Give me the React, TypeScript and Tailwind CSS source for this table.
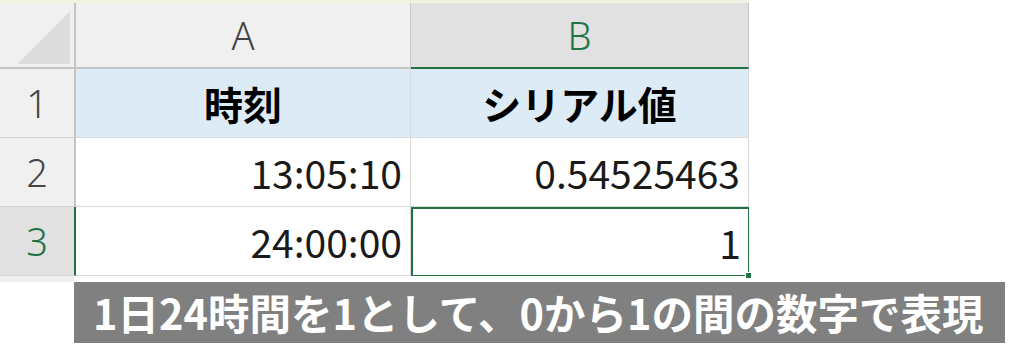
const cjk = "font-['Noto_Sans_CJK_JP',sans-serif]"
const head = "font-['Noto_Sans','Noto_Sans_CJK_JP',sans-serif] font-light text-[38px] text-[#444]"

const RowHead = ({ n, active }: { n: string; active?: boolean }) => (
  <div
    className={`flex items-center justify-center border-b border-[#d4d4d4] ${
      active
        ? "bg-[#e1e1e1] text-[#217346] border-r-2 border-r-[#217346]"
        : "bg-[#f0f0f0] text-[#444] border-r-2 border-r-[#c4c4c4]"
    } ${head}`}
  >
    <span className={active ? "text-[#217346]" : ""}>{n}</span>
  </div>
)

const Cell = ({ children, className = "" }: { children?: React.ReactNode; className?: string }) => (
  <div className={`flex items-center justify-end pr-[8px] border-r border-b border-[#d9d9d9] text-[39px] text-[#1a1a1a] ${cjk} ${className}`}>
    {children}
  </div>
)

export default function App() {
  return (
    <div className="w-[1013px] h-[363px] bg-white overflow-hidden">
      <div className="w-[749px] h-[3px] bg-[#eef2e1]" />

      <div className="grid grid-cols-[76px_335px_338px] grid-rows-[66px_69px_69px_69px] w-[749px]">
        {/* corner */}
        <div className="bg-[#f0f0f0] border-r-2 border-b-2 border-[#c4c4c4] relative">
          <svg width="74" height="64" className="absolute left-0 top-0">
            <polygon points="17,61 70,8 70,61" fill="#dcdcdc" />
          </svg>
        </div>
        <div className={`flex items-center justify-center bg-[#f0f0f0] border-r border-[#c8c8c8] border-b-2 border-b-[#c4c4c4] ${head}`}>
          A
        </div>
        <div className={`flex items-center justify-center bg-[#e1e1e1] border-r border-[#c8c8c8] border-b-2 border-b-[#217346] ${head}`}>
          <span className="text-[#217346]">B</span>
        </div>

        {/* row 1 */}
        <RowHead n="1" />
        <Cell className="!justify-center !pr-0 bg-[#ddebf7] font-bold !text-black">時刻</Cell>
        <Cell className="!justify-center !pr-0 bg-[#ddebf7] font-bold !text-black">シリアル値</Cell>

        {/* row 2 */}
        <RowHead n="2" />
        <Cell>13:05:10</Cell>
        <Cell>0.54525463</Cell>

        {/* row 3 */}
        <RowHead n="3" active />
        <Cell>24:00:00</Cell>
        <div className="relative">
          <Cell className="h-full border-2 !border-[#217346] !pr-[7px]">1</Cell>
          <div className="absolute right-[-3px] bottom-[-3px] w-[7px] h-[7px] bg-[#217346] border border-white" />
        </div>
      </div>

      <div className="w-[74px] h-[6px] bg-[#f0f0f0]" />

      <div className="ml-[74px] w-[931px] h-[61px] bg-[#808080] flex items-center pl-[19px]">
        <span className={`text-white font-bold text-[41.5px] leading-none ${cjk}`}>
          1日24時間を1として、0から1の間の数字で表現
        </span>
      </div>
    </div>
  )
}
